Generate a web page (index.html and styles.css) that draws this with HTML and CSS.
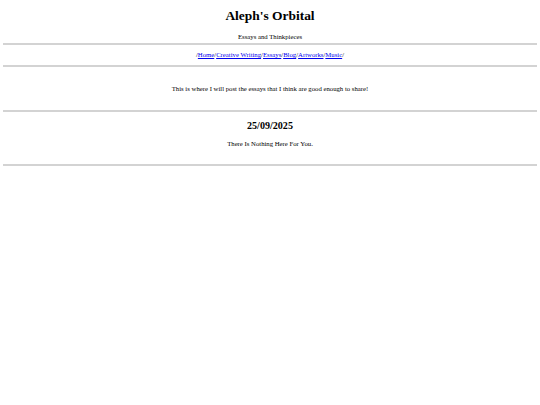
FILE: index.html
```html
<!DOCTYPE html>
<html lang="en">
<head>
    <meta charset="UTF-8">
    <title>Aleph's Orbital - Essays</title>
    <link rel="stylesheet" href="styles.css">
</head>
<body>
    <header>
        <h1>Aleph's Orbital</h1>
        <p class="subtitle">Essays and Thinkpieces</p>
    </header>
    <hr>
    <nav>
        /<a href="#">Home</a>/<a href="#">Creative Writing</a>/<a href="#">Essays</a>/<a href="#">Blog</a>/<a href="#">Artworks</a>/<a href="#">Music</a>/
    </nav>
    <hr>
    <p class="intro">This is where I will post the essays that I think are good enough to share!</p>
    <hr>
    <div class="post">
        <h2>25/09/2025</h2>
        <p>There Is Nothing Here For You.</p>
    </div>
    <hr>
</body>
</html>
```

FILE: styles.css
```css
body {
    margin: 0 3px;
    font-family: 'Liberation Serif', 'Times New Roman', serif;
    font-size: 6.72px;
    color: #000;
    background-color: #fff;
    text-align: center;
}

header {
    padding-top: 8px;
}

h1 {
    font-size: 13.44px;
    margin: 0;
}

.subtitle {
    margin: 9px 0 3px;
}

hr {
    border: none;
    border-top: 2px solid #d3d3d3;
    margin: 0;
}

nav {
    padding: 6px 0 7px;
}

nav a {
    color: #0000ee;
}

.intro {
    margin: 0;
    padding: 18px 0 18px;
}

.post {
    padding: 8px 0 17px;
}

h2 {
    font-size: 10.08px;
    margin: 0 0 9px;
}

.post p {
    margin: 0;
}
```
